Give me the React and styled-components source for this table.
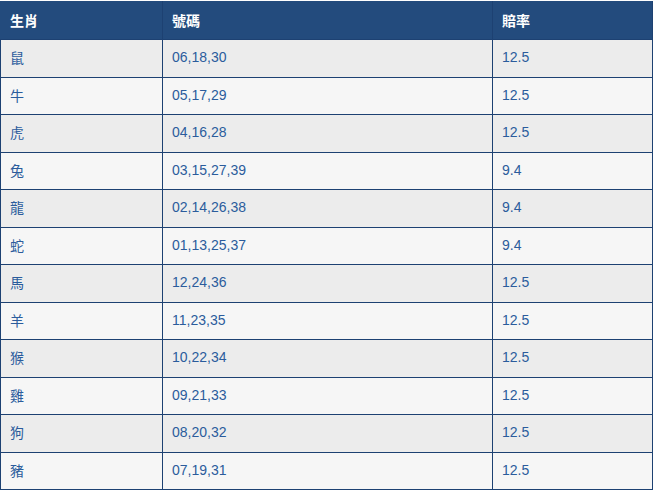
import React from "react";
import styled, {createGlobalStyle} from "styled-components";

const GlobalStyle = createGlobalStyle`
  html, body {
    margin: 0;
    padding: 0;
    background: #ffffff;
  }
  body {
    font-family: "Liberation Sans", "Noto Sans CJK TC", sans-serif;
  }
`;

const Page = styled.div`
  padding: 1px 2px 0 0;
`;

const Table = styled.table`
  width: 652px;
  border-collapse: collapse;
  table-layout: fixed;
  font-size: 14px;
`;

const HeadCell = styled.th`
  background: #234b7d;
  color: #ffffff;
  font-weight: bold;
  text-align: left;
  height: 38.5px;
  padding: 0 0 1px 9px;
  border-left: 1px solid #234b7d;
  border-right: 1px solid #1d4172;
  border-bottom: 1px solid #1d4172;
  box-sizing: border-box;
`;

const Row = styled.tr`
  background: ${p => (p.$odd ? "#ececec" : "#f6f6f6")};
`;

const Cell = styled.td`
  color: #2b5c9c;
  height: 37.5px;
  padding: 0 0 2px 9px;
  border: 1px solid #1d4172;
  box-sizing: border-box;
`;

const rows = [
  ["鼠", "06,18,30", "12.5"],
  ["牛", "05,17,29", "12.5"],
  ["虎", "04,16,28", "12.5"],
  ["兔", "03,15,27,39", "9.4"],
  ["龍", "02,14,26,38", "9.4"],
  ["蛇", "01,13,25,37", "9.4"],
  ["馬", "12,24,36", "12.5"],
  ["羊", "11,23,35", "12.5"],
  ["猴", "10,22,34", "12.5"],
  ["雞", "09,21,33", "12.5"],
  ["狗", "08,20,32", "12.5"],
  ["豬", "07,19,31", "12.5"],
];

export default function App() {
  return (
    <Page>
      <GlobalStyle/>
      <Table>
        <colgroup>
          <col style={{width: "162px"}}/>
          <col style={{width: "330px"}}/>
          <col style={{width: "160px"}}/>
        </colgroup>
        <thead>
          <tr>
            <HeadCell>生肖</HeadCell>
            <HeadCell>號碼</HeadCell>
            <HeadCell>賠率</HeadCell>
          </tr>
        </thead>
        <tbody>
          {rows.map((r, i) =>
            <Row key={r[0]} $odd={i % 2 === 0}>
              <Cell>{r[0]}</Cell>
              <Cell>{r[1]}</Cell>
              <Cell>{r[2]}</Cell>
            </Row>
          )}
        </tbody>
      </Table>
    </Page>
  );
}
